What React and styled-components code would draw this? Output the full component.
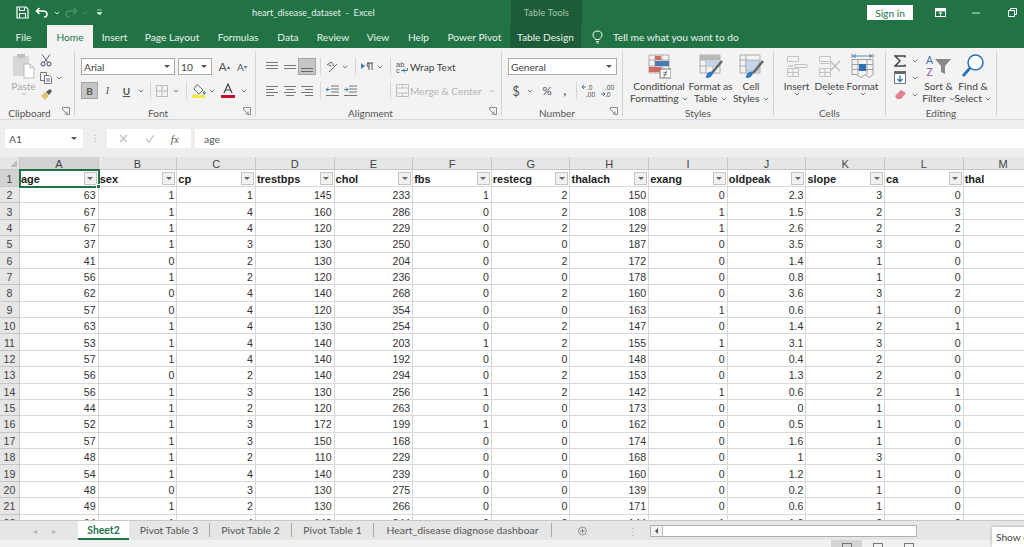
import React from 'react';
import styled, { createGlobalStyle } from 'styled-components';

const UI_FONT = "Lato, 'Noto Sans', sans-serif";
const CELL_FONT = "'Liberation Sans', Arial, sans-serif";

const GlobalStyle = createGlobalStyle`
  html, body { margin: 0; padding: 0; height: 100%; overflow: hidden; background: #fff; }
  body { font-family: ${UI_FONT}; }
`;

const Page = styled.div`
  width: 1024px;
  height: 547px;
  display: flex;
  flex-direction: column;
  overflow: hidden;
  position: relative;
`;

// Title bar + tabs
const TitleBar = styled.div`
  height: 25px;
  flex: none;
  background: #217346;
  display: flex;
  align-items: center;
  color: #e4efe9;
  font-size: 9.2px;
`;
const QuickAccess = styled.div`
  width: 252px;
  flex: none;
  display: flex;
  align-items: center;
  padding-left: 16px;
  box-sizing: border-box;
`;
const DocTitle = styled.div`
  width: 259px;
  flex: none;
  white-space: pre;
`;
const ToolsBand = styled.div`
  width: 71px;
  height: 25px;
  flex: none;
  background: #1c5c38;
  color: #a6c6b4;
  font-size: 9px;
  letter-spacing: 0.2px;
  display: flex;
  align-items: center;
  justify-content: center;
`;
const SignIn = styled.div`
  margin-left: 285px;
  width: 46px;
  height: 15px;
  background: #fff;
  color: #217346;
  font-size: 10.2px;
  display: flex;
  align-items: center;
  justify-content: center;
`;
const WindowButtons = styled.div`
  display: flex;
  align-items: center;
  margin-left: 17px;
`;
const TabRow = styled.div`
  height: 23px;
  flex: none;
  background: #217346;
  display: flex;
  color: #e9f2ed;
  font-size: 10.2px;
`;
const Tab = styled.div`
  width: ${(p) => p.$w}px;
  flex: none;
  display: flex;
  align-items: center;
  justify-content: center;
  white-space: nowrap;
  background: ${(p) => (p.$active ? '#f3f3f3' : p.$dark ? '#1c5c38' : 'transparent')};
  color: ${(p) => (p.$active ? '#217346' : 'inherit')};
`;
const TellMe = styled.div`
  margin-left: 11px;
  display: flex;
  align-items: center;
  gap: 10px;
`;

// Ribbon
const Ribbon = styled.div`
  height: 72px;
  flex: none;
  background: #f3f3f3;
  border-bottom: 1px solid #d8d8d8;
  box-sizing: border-box;
  display: flex;
  color: #444;
  font-size: 10.2px;
`;
const Group = styled.div`
  width: ${(p) => p.$w}px;
  flex: none;
  box-sizing: border-box;
  margin: 3px 0 3px;
  border-right: 1px solid #d2d2d2;
  display: flex;
  flex-direction: column;
  position: relative;
`;
const GroupBody = styled.div`
  height: 56px;
  flex: none;
  display: flex;
  padding-left: ${(p) => p.$pad || 0}px;
`;
const GroupLabel = styled.div`
  flex: 1;
  display: flex;
  align-items: center;
  justify-content: center;
  font-size: 10px;
  color: #555;
  padding-right: ${(p) => p.$shift || 0}px;
`;
const Launcher = styled.svg`
  position: absolute;
  right: 4px;
  bottom: 1px;
  width: 8px;
  height: 8px;
`;
const Rows = styled.div`
  display: flex;
  flex-direction: column;
  gap: ${(p) => p.$gap || 7}px;
  padding-top: ${(p) => p.$top || 7}px;
`;
const Row = styled.div`
  display: flex;
  align-items: center;
  height: ${(p) => p.$h || 17}px;
`;
const Slot = styled.span`
  width: ${(p) => p.$w}px;
  height: ${(p) => p.$h || 17}px;
  flex: none;
  display: flex;
  align-items: center;
  justify-content: center;
  box-sizing: border-box;
  font-size: ${(p) => p.$size || 10}px;
  color: ${(p) => p.$color || '#555'};
  background: ${(p) => (p.$on ? '#c6c6c6' : 'transparent')};
  border: ${(p) => (p.$on ? '1px solid #a5a5a5' : 'none')};
`;
const Sep = styled.span`
  width: ${(p) => p.$w || 8}px;
  flex: none;
  height: 17px;
  display: flex;
  justify-content: center;
  &::before {
    content: '';
    width: 1px;
    background: #d5d5d5;
  }
`;
const Select = styled.div`
  width: ${(p) => p.$w}px;
  height: 17px;
  flex: none;
  box-sizing: border-box;
  background: #fff;
  border: 1px solid #ababab;
  display: flex;
  align-items: center;
  justify-content: space-between;
  padding: 0 4px 0 2px;
  margin-right: ${(p) => p.$mr || 0}px;
  font-size: 10.2px;
  color: #444;
`;
const TextLabel = styled.span`
  color: ${(p) => (p.$off ? '#b4b4b4' : '#444')};
  white-space: nowrap;
  font-size: 10.2px;
`;
const BigButton = styled.div`
  width: ${(p) => p.$w}px;
  flex: none;
  display: flex;
  flex-direction: column;
  align-items: center;
  padding-top: 2px;
  line-height: 12px;
  text-align: center;
  white-space: nowrap;
  color: ${(p) => (p.$off ? '#a8a8a8' : '#444')};
`;
const BigIcon = styled.div`
  height: 26px;
  margin-bottom: 1px;
  display: flex;
  align-items: center;
  justify-content: center;
`;
const ToolColumn = styled.div`
  display: flex;
  flex-direction: column;
  align-items: flex-start;
  padding-top: 1px;
`;

// Formula bar
const FormulaBar = styled.div`
  height: 37px;
  flex: none;
  background: #eeeeee;
  display: flex;
  align-items: center;
  padding: 0 0 0 5px;
  box-sizing: border-box;
  font-size: 10.4px;
  color: #555;
`;
const NameBox = styled.div`
  width: 78px;
  height: 19px;
  flex: none;
  box-sizing: border-box;
  background: #fff;
  display: flex;
  align-items: center;
  justify-content: space-between;
  padding: 0 6px 0 4px;
`;
const Grip = styled.div`
  width: 24px;
  flex: none;
  text-align: center;
  color: #aaa;
  font-size: 9px;
  line-height: 4px;
`;
const FxBox = styled.div`
  width: 84px;
  height: 19px;
  flex: none;
  background: #fff;
  display: flex;
  align-items: center;
  justify-content: space-around;
  padding: 0 4px;
  box-sizing: border-box;
  margin-right: 4px;
`;
const FormulaInput = styled.div`
  flex: 1;
  height: 19px;
  background: #fff;
  display: flex;
  align-items: center;
  padding-left: 9px;
`;

// Sheet
const SheetClip = styled.div`
  height: 363px;
  flex: none;
  overflow: hidden;
  background: #fff;
`;
const SheetGrid = styled.div`
  display: grid;
  grid-template-columns: 20px repeat(12, 78.65px) 80px;
  grid-template-rows: 13px 17px;
  grid-auto-rows: 16.38px;
  font-family: ${CELL_FONT};
  font-size: 10.6px;
  color: #333;
`;
const Corner = styled.div`
  background: #e6e6e6;
  border-right: 1px solid #c6c6c6;
  border-bottom: 1px solid #c6c6c6;
  position: relative;
  &::after {
    content: '';
    position: absolute;
    right: 2px;
    bottom: 2px;
    border-left: 7px solid transparent;
    border-bottom: 7px solid #bdbdbd;
  }
`;
const ColHead = styled.div`
  background: ${(p) => (p.$on ? '#d2d2d2' : '#e6e6e6')};
  border-right: 1px solid #c6c6c6;
  border-bottom: ${(p) => (p.$on ? '1px solid #217346' : '1px solid #c6c6c6')};
  box-sizing: border-box;
  display: flex;
  align-items: center;
  justify-content: center;
  padding-top: 1px;
  color: #444;
  font-size: 11px;
`;
const RowHead = styled.div`
  background: ${(p) => (p.$on ? '#d2d2d2' : '#e6e6e6')};
  border-right: ${(p) => (p.$on ? '1px solid #217346' : '1px solid #c6c6c6')};
  border-bottom: 1px solid #c6c6c6;
  box-sizing: border-box;
  display: flex;
  align-items: center;
  justify-content: center;
  padding-top: 1px;
  color: #444;
  font-size: 10.6px;
`;
const Cell = styled.div`
  border-right: 1px solid #d8d8d8;
  border-bottom: 1px solid #d8d8d8;
  box-sizing: border-box;
  display: flex;
  align-items: center;
  justify-content: flex-end;
  padding: 1px 2px 0 0;
  white-space: nowrap;
`;
const HeadCell = styled(Cell)`
  justify-content: space-between;
  font-weight: 700;
  font-size: 11px;
  color: #222;
  padding: 0 1px 0 1px;
  position: relative;
  outline: ${(p) => (p.$selected ? '2px solid #217346' : 'none')};
  outline-offset: -1px;
  z-index: ${(p) => (p.$selected ? 1 : 0)};
`;
const HeadName = styled.span`
  padding-top: 2px;
`;
const Handle = styled.span`
  position: absolute;
  right: -3px;
  bottom: -3px;
  width: 5px;
  height: 5px;
  background: #217346;
  border: 1px solid #fff;
  box-sizing: border-box;
`;
const FilterButton = styled.span`
  width: 13px;
  height: 13px;
  flex: none;
  box-sizing: border-box;
  background: #f1f1f1;
  border: 1px solid #c4c4c4;
  display: flex;
  align-items: center;
  justify-content: center;
  &::before {
    content: '';
    border-left: 3px solid transparent;
    border-right: 3px solid transparent;
    border-top: 3px solid #666;
  }
`;

// Sheet tabs
const TabsBar = styled.div`
  height: 20px;
  flex: none;
  background: #e6e6e6;
  border-top: 1px solid #c8c8c8;
  box-sizing: border-box;
  display: flex;
  align-items: stretch;
  font-size: 10.4px;
  color: #555;
`;
const ScrollArrows = styled.div`
  width: 78px;
  flex: none;
  display: flex;
  align-items: center;
  justify-content: flex-end;
  gap: 15px;
  padding-right: 22px;
  box-sizing: border-box;
  color: #b4b4b4;
  font-size: 8px;
`;
const SheetTab = styled.div`
  width: ${(p) => p.$w}px;
  flex: none;
  box-sizing: border-box;
  display: flex;
  align-items: center;
  justify-content: center;
  white-space: nowrap;
  background: ${(p) => (p.$active ? '#fff' : 'transparent')};
  color: ${(p) => (p.$active ? '#217346' : '#555')};
  font-weight: ${(p) => (p.$active ? 700 : 400)};
  border-bottom: ${(p) => (p.$active ? '2px solid #217346' : 'none')};
  border-right: ${(p) => (p.$active ? 'none' : '1px solid #a8a8a8')};
  margin: ${(p) => (p.$active ? '0' : '2px 0 3px')};
`;
const AddSheet = styled.div`
  width: 86px;
  flex: none;
  display: flex;
  align-items: center;
  padding-left: 26px;
  box-sizing: border-box;
  gap: 41px;
  color: #aaa;
`;
const ScrollTrack = styled.div`
  width: 267px;
  height: 12px;
  margin-top: 4px;
  margin-left: 12px;
  flex: none;
  box-sizing: border-box;
  background: #fff;
  border: 1px solid #b0b0b0;
  display: flex;
  align-items: stretch;
`;
const ScrollLeft = styled.span`
  width: 11px;
  flex: none;
  background: #f1f1f1;
  border-right: 1px solid #c0c0c0;
  display: flex;
  align-items: center;
  justify-content: center;
  &::before {
    content: '';
    border-top: 3px solid transparent;
    border-bottom: 3px solid transparent;
    border-right: 3px solid #555;
  }
`;
const StatusBar = styled.div`
  height: 7px;
  flex: none;
  background: #f1f1f1;
  display: flex;
  padding-left: 831px;
  overflow: hidden;
`;
const ViewSlot = styled.span`
  width: 31px;
  flex: none;
  background: ${(p) => (p.$on ? '#d4d4d4' : 'transparent')};
  display: flex;
  justify-content: center;
  padding-top: 3px;
  box-sizing: border-box;
`;
const ViewIcon = styled.span`
  width: 10px;
  height: 8px;
  box-sizing: border-box;
  border: 1px solid #777;
`;
const Hint = styled.div`
  position: absolute;
  left: 992px;
  top: 527px;
  width: 40px;
  height: 20px;
  background: #fff;
  box-shadow: 0 0 3px rgba(0, 0, 0, 0.3);
  color: #444;
  font-size: 10.2px;
  display: flex;
  align-items: center;
  padding-left: 4px;
  white-space: nowrap;
`;
const InlineChev = styled.span`
  display: inline-flex;
  vertical-align: middle;
  margin-left: 1px;
`;
const FxLabel = styled.span`
  font-family: 'Liberation Serif', serif;
  font-style: italic;
  font-size: 11px;
  color: #555;
`;
const Tiny = styled.sup`
  font-size: 6px;
  color: ${(p) => p.$color || 'inherit'};
`;
const ItalicI = styled.i`
  font-family: 'Liberation Serif', serif;
`;

// Icons
const Chev = ({ color = '#777' }) => (
  <svg width="6" height="4" viewBox="0 0 6 4"><path d="M.8.8 3 3l2.2-2.2" fill="none" stroke={color} /></svg>
);
const DownTri = () => (
  <svg width="6" height="4" viewBox="0 0 6 4"><path d="M0 0h6L3 3z" fill="#555" /></svg>
);
const LauncherIcon = () => (
  <Launcher viewBox="0 0 8 8"><path d="M.5 3V.5H7.5V7.5H5M1 3l4 4M5 4.5V7H2.5" fill="none" stroke="#8a8a8a" /></Launcher>
);
const SaveIcon = () => (
  <svg width="13" height="13" viewBox="0 0 13 13"><path d="M1 1h9l2 2v9H1z" fill="none" stroke="#fff" strokeWidth="1.2" /><path d="M3.5 1.5v3h5v-3M3.5 11.5V7.5h6v4" fill="none" stroke="#fff" /></svg>
);
const UndoIcon = ({ color }) => (
  <svg width="13" height="11" viewBox="0 0 13 11"><path d="M4.5 1 1.500 4l3 3M1.500 4H8c2.500 0 4 1.500 4 3.200S10.800 10 9 10" fill="none" stroke={color} strokeWidth="1.5" /></svg>
);
const RedoIcon = ({ color }) => (
  <svg width="13" height="11" viewBox="0 0 13 11"><path d="M8.500 1l3 3-3 3M11.500 4H5C2.500 4 1 5.500 1 7.200S2.200 10 4 10" fill="none" stroke={color} strokeWidth="1.5" /></svg>
);
const QuickMenu = () => (
  <svg width="7" height="7" viewBox="0 0 7 7"><path d="M1 1h5M1 3.500l2.500 2.500L6 3.500z" fill="#dbe9e1" stroke="#dbe9e1" strokeWidth=".7" /></svg>
);
const RibbonDisplay = () => (
  <svg width="11" height="9" viewBox="0 0 11 9"><rect x=".5" y=".5" width="10" height="8" fill="none" stroke="#fff" /><path d="M1 1h9v2H1zM5.500 8V4M4 5.500l1.500-1.500L7 5.500" stroke="#fff" fill="#fff" strokeWidth=".8" /></svg>
);
const MinLine = () => (
  <svg width="9" height="2" viewBox="0 0 9 2"><path d="M0 1h8" stroke="#d7e6dd" /></svg>
);
const RestoreIcon = () => (
  <svg width="9" height="9" viewBox="0 0 9 9"><path d="M.5 2.500h6v6h-6zM2.500 2.500v-2h6v6h-2" fill="none" stroke="#fff" /></svg>
);
const Bulb = () => (
  <svg width="11" height="14" viewBox="0 0 11 14"><path d="M3.500 9.500C2.800 7.800 1 7 1 4.800 1 2.500 3 1 5.500 1S10 2.500 10 4.800c0 2.200-1.800 3-2.500 4.700zM4 11.500h3M4.500 13h2" fill="none" stroke="#fff" /></svg>
);
const PasteIcon = () => (
  <svg width="24" height="26" viewBox="0 0 24 26">
    <rect x="1" y="3" width="16" height="20" fill="#d6d6d6" />
    <rect x="5" y="1" width="8" height="4" fill="#bfbfbf" />
    <path d="M12 11h6l4 4v10H12z" fill="#fff" stroke="#bdbdbd" />
    <path d="M18 11v4h4" fill="none" stroke="#bdbdbd" />
  </svg>
);
const ScissorsIcon = () => (
  <svg width="12" height="13" viewBox="0 0 12 13"><circle cx="3" cy="10" r="2" fill="none" stroke="#3c4a66" /><circle cx="9" cy="10" r="2" fill="none" stroke="#3c4a66" /><path d="M2 .5 8 8.500M10 .5 4 8.500" stroke="#666" fill="none" /></svg>
);
const CopyIcon = () => (
  <svg width="12" height="12" viewBox="0 0 12 12"><path d="M.5.500h6v8h-6z" fill="#f3f3f3" stroke="#777" /><path d="M4.500 3.500h5l2 2v6h-7z" fill="#fff" stroke="#777" /><path d="M6 7h4M6 9h4" stroke="#4a78a8" /></svg>
);
const BrushIcon = () => (
  <svg width="13" height="13" viewBox="0 0 13 13"><path d="M1 8l4-4 4 4-4 4z" fill="#e8bf6a" /><path d="M6 4l4-3 2 2-3 4z" fill="#555" /></svg>
);
const BordersIcon = () => (
  <svg width="12" height="12" viewBox="0 0 12 12"><path d="M.5.500h11v11H.5zM6 .5v11M.5 6h11" fill="none" stroke="#b9b9b9" /></svg>
);
const FillIcon = () => (
  <svg width="15" height="15" viewBox="0 0 15 15"><path d="M5 1.500 11 7l-4 4-5-5z" fill="#fff" stroke="#666" /><path d="M12 7.500c1 1.500 1.500 2 1.500 2.800a1 1 0 0 1-2.500 0c0-.8.500-1.300 1-2.800z" fill="#4a7ab0" /><path d="M0 12h13v3H0z" fill="#f7e93a" /></svg>
);
const FontColorIcon = () => (
  <svg width="14" height="15" viewBox="0 0 14 15"><path d="M3 10 7 1l4 9M4.500 7h5" fill="none" stroke="#444" strokeWidth="1.200" /><path d="M0 12h14v3H0z" fill="#c8102e" /></svg>
);
const AlignLines = ({ lines, color = '#777', w = 12 }) => (
  <svg width={w} height="11" viewBox={`0 0 ${w} 11`}>
    {lines.map(([x1, x2, y], i) => <path key={i} d={`M${x1} ${y + 0.5}H${x2}`} stroke={color} />)}
  </svg>
);
const OrientIcon = () => (
  <svg width="12" height="12" viewBox="0 0 12 12"><path d="M1 4l4-3 3 4M2.500 4l3 1M3 11l8-8" fill="none" stroke="#666" /></svg>
);
const ParaIcon = () => (
  <svg width="13" height="9" viewBox="0 0 13 9"><path d="M0 1l4 3-4 3z" fill="#4a7ab0" /><path d="M6 1h6M8 1v7M11 1v7M8 1a2 2 0 0 0 0 4" fill="none" stroke="#555" /></svg>
);
const IndentIcon = ({ reverse }) => (
  <svg width="13" height="11" viewBox="0 0 13 11"><path d="M5 1h8M5 4h8M5 7h8M0 10.500h13" stroke="#777" /><path d={reverse ? 'M0 4.500h4M2 2.500 0 4.500l2 2' : 'M0 4.500h4M2 2.500l2 2-2 2'} fill="none" stroke="#3b78b4" /></svg>
);
const WrapIcon = () => (
  <svg width="13" height="14" viewBox="0 0 13 14"><text x="0" y="6.500" fontSize="7.500" fontFamily="'Liberation Sans', sans-serif" fill="#555">ab</text><text x="0" y="13" fontSize="7.500" fontFamily="'Liberation Sans', sans-serif" fill="#555">c</text><path d="M5 10.500h6.500V8M9 12.500l-2-2 2-2" fill="none" stroke="#3b78b4" /></svg>
);
const MergeIcon = () => (
  <svg width="13" height="13" viewBox="0 0 13 13"><path d="M.5.500h12v12H.5zM.5 4h12M.5 9h12M6.500.5V4M6.500 9v3.500" fill="none" stroke="#bfbfbf" /></svg>
);
const DecimalIcon = ({ up }) => (
  <svg width="14" height="14" viewBox="0 0 14 14">
    <text x={up ? 5 : 4} y="6" fontSize="6.500" fontFamily="'Noto Sans', sans-serif" fill="#555">{up ? '.0' : '.00'}</text>
    <text x="4" y="13" fontSize="6.500" fontFamily="'Noto Sans', sans-serif" fill="#555">{up ? '.00' : '.0'}</text>
    <path d={up ? 'M0 3h4M2 1 0 3l2 2' : 'M0 10h4M2 8l2 2-2 2'} fill="none" stroke="#3b78b4" />
  </svg>
);
const GridBase = () => (
  <g fill="none" stroke="#9a9a9a" strokeWidth=".8">
    <path d="M2 2h20v18H2zM2 7h20M2 13h20M8 2v18M15 2v18" />
  </g>
);
const CondIcon = () => (
  <svg width="24" height="26" viewBox="0 0 24 26">
    <GridBase />
    <rect x="8" y="3" width="6" height="4" fill="#d26a5e" /><rect x="8" y="8" width="14" height="5" fill="#4a7ab0" /><rect x="2" y="14" width="12" height="5" fill="#d26a5e" />
    <rect x="13" y="16" width="11" height="9" fill="#fff" stroke="#777" />
    <text x="15.500" y="24" fontSize="9" fontFamily="'Noto Sans', sans-serif" fill="#444">≠</text>
  </svg>
);
const TableStyleIcon = () => (
  <svg width="26" height="26" viewBox="0 0 26 26">
    <GridBase />
    <rect x="8" y="7" width="14" height="6" fill="#c5d3e6" /><rect x="2" y="2" width="20" height="5" fill="#b8b8b8" />
    <path d="M24 8 14 20" stroke="#666" strokeWidth="2.500" />
    <path d="M8 25c0-5 3-7 7-6 0 4-3 6-7 6z" fill="#2f78c4" />
  </svg>
);
const CellStyleIcon = () => (
  <svg width="26" height="26" viewBox="0 0 26 26">
    <path d="M2 2h20v18H2zM2 7h6M2 13h6M8 2v18" fill="none" stroke="#9a9a9a" strokeWidth=".8" />
    <rect x="8" y="7" width="13" height="11" fill="#c5d6ec" stroke="#9a9a9a" strokeWidth=".6" />
    <path d="M25 8 15 20" stroke="#666" strokeWidth="2.500" />
    <path d="M8 25c0-5 3-7 7-6 0 4-3 6-7 6z" fill="#2f78c4" />
  </svg>
);
const InsertIcon = () => (
  <svg width="22" height="24" viewBox="0 0 22 24" fill="none" stroke="#c4c4c4"><path d="M1.500 2.500h11v5h-11zM1.500 14.500h11v8h-11zM7 14.500v8M1.500 18.500h11M9 10.500h12v3H9z" /><path d="M2 12h5" stroke="#b0b0b0" /></svg>
);
const DeleteIcon = () => (
  <svg width="24" height="24" viewBox="0 0 24 24" fill="none" stroke="#c4c4c4"><path d="M1.500 2.500h11v5h-11zM1.500 14.500h11v8h-11zM7 14.500v8M1.500 18.500h11M1.500 9.500h11v3" /><path d="M12 7l10 10M22 7 12 17" stroke="#bbb" strokeWidth="1.300" /></svg>
);
const FormatIcon = () => (
  <svg width="24" height="26" viewBox="0 0 24 26">
    <path d="M1 6.500h21v15l-4 3-4-3-4 3-4-3H1zM1 11.500h21M1 16.500h21M7 6.500v15M16 6.500v15" fill="none" stroke="#8a8a8a" strokeWidth=".8" />
    <rect x="8" y="11" width="7" height="7" fill="#2f6fb5" />
    <path d="M1 1v4M22 1v4M2 3h19M5 1.500 2 3l3 1.500M18 1.500 21 3l-3 1.500" fill="none" stroke="#3f6e9f" strokeWidth=".8" />
  </svg>
);
const SigmaIcon = () => (
  <svg width="12" height="12" viewBox="0 0 12 12"><path d="M11 2.500V1H1l5 5-5 5h10V9.500" fill="none" stroke="#444" strokeWidth="1.500" /></svg>
);
const FillDownIcon = () => (
  <svg width="12" height="13" viewBox="0 0 12 13"><rect x=".5" y=".5" width="11" height="12" fill="#fff" stroke="#777" /><rect x=".5" y=".5" width="11" height="2.500" fill="#666" /><path d="M6 4.500v6M3.500 8 6 10.500 8.500 8" fill="none" stroke="#2a6fb5" strokeWidth="1.300" /></svg>
);
const EraserIcon = () => (
  <svg width="13" height="11" viewBox="0 0 13 11"><path d="M1 7l6-6 5 3-5 6H3z" fill="#e77f92" /></svg>
);
const SortIcon = () => (
  <svg width="27" height="26" viewBox="0 0 27 26">
    <text x="1" y="11" fontSize="11" fontFamily="'Noto Sans', sans-serif" fill="#3b78b4">A</text>
    <text x="1.500" y="23" fontSize="11" fontFamily="'Noto Sans', sans-serif" fill="#8d5aa5">Z</text>
    <path d="M10 6h16l-6 7v8l-4-2v-6z" fill="#8a8a8a" />
  </svg>
);
const FindIcon = () => (
  <svg width="24" height="26" viewBox="0 0 24 26"><circle cx="14.500" cy="9.500" r="7.500" fill="#fff" stroke="#2a72b8" strokeWidth="1.500" /><path d="M9 15 2 23" stroke="#2a72b8" strokeWidth="2.800" /></svg>
);
const XMark = () => (
  <svg width="9" height="9" viewBox="0 0 9 9"><path d="m1 1 7 7M8 1 1 8" stroke="#bdbdbd" strokeWidth="1.200" /></svg>
);
const CheckMark = () => (
  <svg width="10" height="9" viewBox="0 0 10 9"><path d="M1 5l3 3 5-7" fill="none" stroke="#bdbdbd" strokeWidth="1.200" /></svg>
);
const PlusCircle = () => (
  <svg width="12" height="12" viewBox="0 0 12 12"><circle cx="6" cy="6" r="5.300" fill="none" stroke="#777" /><path d="M6 3v6M3 6h6" stroke="#666" /></svg>
);

const COLS = ['A', 'B', 'C', 'D', 'E', 'F', 'G', 'H', 'I', 'J', 'K', 'L', 'M'];
const HEADERS = ['age', 'sex', 'cp', 'trestbps', 'chol', 'fbs', 'restecg', 'thalach', 'exang', 'oldpeak', 'slope', 'ca', 'thal'];
const DATA = [
  [63, 1, 1, 145, 233, 1, 2, 150, 0, 2.3, 3, 0],
  [67, 1, 4, 160, 286, 0, 2, 108, 1, 1.5, 2, 3],
  [67, 1, 4, 120, 229, 0, 2, 129, 1, 2.6, 2, 2],
  [37, 1, 3, 130, 250, 0, 0, 187, 0, 3.5, 3, 0],
  [41, 0, 2, 130, 204, 0, 2, 172, 0, 1.4, 1, 0],
  [56, 1, 2, 120, 236, 0, 0, 178, 0, 0.8, 1, 0],
  [62, 0, 4, 140, 268, 0, 2, 160, 0, 3.6, 3, 2],
  [57, 0, 4, 120, 354, 0, 0, 163, 1, 0.6, 1, 0],
  [63, 1, 4, 130, 254, 0, 2, 147, 0, 1.4, 2, 1],
  [53, 1, 4, 140, 203, 1, 2, 155, 1, 3.1, 3, 0],
  [57, 1, 4, 140, 192, 0, 0, 148, 0, 0.4, 2, 0],
  [56, 0, 2, 140, 294, 0, 2, 153, 0, 1.3, 2, 0],
  [56, 1, 3, 130, 256, 1, 2, 142, 1, 0.6, 2, 1],
  [44, 1, 2, 120, 263, 0, 0, 173, 0, 0, 1, 0],
  [52, 1, 3, 172, 199, 1, 0, 162, 0, 0.5, 1, 0],
  [57, 1, 3, 150, 168, 0, 0, 174, 0, 1.6, 1, 0],
  [48, 1, 2, 110, 229, 0, 0, 168, 0, 1, 3, 0],
  [54, 1, 4, 140, 239, 0, 0, 160, 0, 1.2, 1, 0],
  [48, 0, 3, 130, 275, 0, 0, 139, 0, 0.2, 1, 0],
  [49, 1, 2, 130, 266, 0, 0, 171, 0, 0.6, 1, 0],
  [64, 1, 4, 140, 244, 0, 0, 144, 1, 1.2, 2, 0],
];

const LEFT = [[0, 12, 1], [0, 8, 4], [0, 12, 7], [0, 8, 10]];
const CENTER = [[0, 12, 1], [2, 10, 4], [0, 12, 7], [2, 10, 10]];
const RIGHT = [[0, 12, 1], [4, 12, 4], [0, 12, 7], [4, 12, 10]];

const App = () => (
  <Page>
    <GlobalStyle />
    <TitleBar>
      <QuickAccess>
        <SaveIcon />
        <Slot $w={24}><UndoIcon color="#fff" /></Slot>
        <Slot $w={8}><Chev color="#cfe0d6" /></Slot>
        <Slot $w={20}><RedoIcon color="#4d8f6c" /></Slot>
        <Slot $w={8}><Chev color="#4d8f6c" /></Slot>
        <Slot $w={20}><QuickMenu /></Slot>
      </QuickAccess>
      <DocTitle>heart_disease_dataset  -  Excel</DocTitle>
      <ToolsBand>Table Tools</ToolsBand>
      <SignIn>Sign in</SignIn>
      <WindowButtons>
        <Slot $w={20}><RibbonDisplay /></Slot>
        <Slot $w={52}><MinLine /></Slot>
        <Slot $w={20}><RestoreIcon /></Slot>
      </WindowButtons>
    </TitleBar>

    <TabRow>
      <Tab $w={47}>File</Tab>
      <Tab $w={46} $active>Home</Tab>
      <Tab $w={43}>Insert</Tab>
      <Tab $w={72}>Page Layout</Tab>
      <Tab $w={60}>Formulas</Tab>
      <Tab $w={40}>Data</Tab>
      <Tab $w={50}>Review</Tab>
      <Tab $w={40}>View</Tab>
      <Tab $w={41}>Help</Tab>
      <Tab $w={71}>Power Pivot</Tab>
      <Tab $w={71} $dark>Table Design</Tab>
      <TellMe><Bulb /><span>Tell me what you want to do</span></TellMe>
    </TabRow>

    <Ribbon>
      <Group $w={75}>
        <GroupBody $pad={11}>
          <BigButton $w={25} $off>
            <BigIcon><PasteIcon /></BigIcon>
            <span>Paste</span>
            <Chev color="#bbb" />
          </BigButton>
          <ToolColumn>
            <Slot $w={20}><ScissorsIcon /></Slot>
            <Row>
              <Slot $w={20}><CopyIcon /></Slot>
              <Slot $w={6}><Chev /></Slot>
            </Row>
            <Slot $w={20}><BrushIcon /></Slot>
          </ToolColumn>
        </GroupBody>
        <GroupLabel $shift={15}>Clipboard</GroupLabel>
        <LauncherIcon />
      </Group>

      <Group $w={181}>
        <GroupBody $pad={6}>
          <Rows>
            <Row>
              <Select $w={94} $mr={3}>Arial<DownTri /></Select>
              <Select $w={34}>10<DownTri /></Select>
              <Slot $w={24} $size={12}>A<Tiny>▴</Tiny></Slot>
              <Slot $w={12} $size={10}>A<Tiny $color="#2a72b8">▾</Tiny></Slot>
            </Row>
            <Row>
              <Slot $w={17} $on><b>B</b></Slot>
              <Slot $w={19}><ItalicI>I</ItalicI></Slot>
              <Slot $w={19}><u><b>U</b></u></Slot>
              <Slot $w={10}><Chev /></Slot>
              <Sep />
              <Slot $w={16}><BordersIcon /></Slot>
              <Slot $w={11}><Chev /></Slot>
              <Sep $w={10} />
              <Slot $w={16}><FillIcon /></Slot>
              <Slot $w={10}><Chev /></Slot>
              <Slot $w={22}><FontColorIcon /></Slot>
              <Slot $w={9}><Chev /></Slot>
            </Row>
          </Rows>
        </GroupBody>
        <GroupLabel $shift={14}>Font</GroupLabel>
        <LauncherIcon />
      </Group>

      <Group $w={246}>
        <GroupBody $pad={7}>
          <Rows>
            <Row>
              <Slot $w={18}><AlignLines lines={[[0, 12, 1], [0, 12, 4], [0, 12, 7]]} /></Slot>
              <Slot $w={17}><AlignLines lines={[[0, 12, 4], [0, 12, 7]]} /></Slot>
              <Slot $w={18} $on><AlignLines lines={[[0, 12, 7], [0, 12, 10]]} color="#666" /></Slot>
              <Sep />
              <Slot $w={16}><OrientIcon /></Slot>
              <Slot $w={9}><Chev /></Slot>
              <Sep $w={12} />
              <Slot $w={13}><ParaIcon /></Slot>
              <Slot $w={12}><Chev /></Slot>
              <Sep />
              <Slot $w={16}><WrapIcon /></Slot>
              <TextLabel>Wrap Text</TextLabel>
            </Row>
            <Row>
              <Slot $w={18}><AlignLines lines={LEFT} /></Slot>
              <Slot $w={17}><AlignLines lines={CENTER} /></Slot>
              <Slot $w={18}><AlignLines lines={RIGHT} /></Slot>
              <Sep />
              <Slot $w={16}><IndentIcon reverse /></Slot>
              <Slot $w={20}><IndentIcon /></Slot>
              <Slot $w={26} />
              <Sep />
              <Slot $w={16}><MergeIcon /></Slot>
              <TextLabel $off>Merge &amp; Center</TextLabel>
              <Slot $w={20}><Chev color="#bbb" /></Slot>
            </Row>
          </Rows>
        </GroupBody>
        <GroupLabel $shift={16}>Alignment</GroupLabel>
        <LauncherIcon />
      </Group>

      <Group $w={121}>
        <GroupBody $pad={6}>
          <Rows>
            <Row>
              <Select $w={109}>General<DownTri /></Select>
            </Row>
            <Row>
              <Slot $w={16} $size={13}>$</Slot>
              <Slot $w={12}><Chev /></Slot>
              <Slot $w={22} $size={12}>%</Slot>
              <Slot $w={14} $size={12}><b>,</b></Slot>
              <Sep $w={9} />
              <Slot $w={16}><DecimalIcon up /></Slot>
              <Slot $w={22}><DecimalIcon /></Slot>
            </Row>
          </Rows>
        </GroupBody>
        <GroupLabel $shift={10}>Number</GroupLabel>
        <LauncherIcon />
      </Group>

      <Group $w={151}>
        <GroupBody $pad={8}>
          <BigButton $w={56}>
            <BigIcon><CondIcon /></BigIcon>
            <span>Conditional</span>
            <span>Formatting <InlineChev><Chev /></InlineChev></span>
          </BigButton>
          <BigButton $w={47}>
            <BigIcon><TableStyleIcon /></BigIcon>
            <span>Format as</span>
            <span>Table <InlineChev><Chev /></InlineChev></span>
          </BigButton>
          <BigButton $w={34}>
            <BigIcon><CellStyleIcon /></BigIcon>
            <span>Cell</span>
            <span>Styles <InlineChev><Chev /></InlineChev></span>
          </BigButton>
        </GroupBody>
        <GroupLabel>Styles</GroupLabel>
      </Group>

      <Group $w={112}>
        <GroupBody $pad={6}>
          <BigButton $w={33}>
            <BigIcon><InsertIcon /></BigIcon>
            <span>Insert</span>
            <Chev />
          </BigButton>
          <BigButton $w={33}>
            <BigIcon><DeleteIcon /></BigIcon>
            <span>Delete</span>
            <Chev />
          </BigButton>
          <BigButton $w={33}>
            <BigIcon><FormatIcon /></BigIcon>
            <span>Format</span>
            <Chev />
          </BigButton>
        </GroupBody>
        <GroupLabel>Cells</GroupLabel>
      </Group>

      <Group $w={111}>
        <GroupBody $pad={6}>
          <ToolColumn>
            <Row><Slot $w={16}><SigmaIcon /></Slot><Slot $w={13}><Chev /></Slot></Row>
            <Row><Slot $w={16}><FillDownIcon /></Slot><Slot $w={13}><Chev /></Slot></Row>
            <Row><Slot $w={16}><EraserIcon /></Slot><Slot $w={13}><Chev /></Slot></Row>
          </ToolColumn>
          <BigButton $w={35}>
            <BigIcon><SortIcon /></BigIcon>
            <span>Sort &amp;</span>
            <span>Filter <InlineChev><Chev /></InlineChev></span>
          </BigButton>
          <BigButton $w={34}>
            <BigIcon><FindIcon /></BigIcon>
            <span>Find &amp;</span>
            <span>Select <InlineChev><Chev /></InlineChev></span>
          </BigButton>
        </GroupBody>
        <GroupLabel>Editing</GroupLabel>
      </Group>
    </Ribbon>

    <FormulaBar>
      <NameBox>A1<DownTri /></NameBox>
      <Grip>⋮</Grip>
      <FxBox>
        <XMark />
        <CheckMark />
        <FxLabel>fx</FxLabel>
      </FxBox>
      <FormulaInput>age</FormulaInput>
    </FormulaBar>

    <SheetClip>
      <SheetGrid>
        <Corner />
        {COLS.map((c, i) => <ColHead key={c} $on={i === 0}>{c}</ColHead>)}
        <RowHead $on>1</RowHead>
        {HEADERS.map((h, i) => (
          <HeadCell key={h} $selected={i === 0}>
            <HeadName>{h}</HeadName>
            {i < 12 && <FilterButton />}
            {i === 0 && <Handle />}
          </HeadCell>
        ))}
        {DATA.map((row, r) => (
          <React.Fragment key={r}>
            <RowHead>{r + 2}</RowHead>
            {row.map((v, c) => <Cell key={c}>{v}</Cell>)}
            <Cell />
          </React.Fragment>
        ))}
      </SheetGrid>
    </SheetClip>

    <TabsBar>
      <ScrollArrows><span>◂</span><span>▸</span></ScrollArrows>
      <SheetTab $w={51} $active>Sheet2</SheetTab>
      <SheetTab $w={81}>Pivot Table 3</SheetTab>
      <SheetTab $w={82}>Pivot Table 2</SheetTab>
      <SheetTab $w={82}>Pivot Table 1</SheetTab>
      <SheetTab $w={178}>Heart_disease diagnose dashboar</SheetTab>
      <AddSheet><PlusCircle /><span>⋮</span></AddSheet>
      <ScrollTrack><ScrollLeft /></ScrollTrack>
    </TabsBar>
    <StatusBar>
      <ViewSlot $on><ViewIcon /></ViewSlot>
      <ViewSlot><ViewIcon /></ViewSlot>
      <ViewSlot><ViewIcon /></ViewSlot>
    </StatusBar>
    <Hint>Show c</Hint>
  </Page>
);

export default App;
